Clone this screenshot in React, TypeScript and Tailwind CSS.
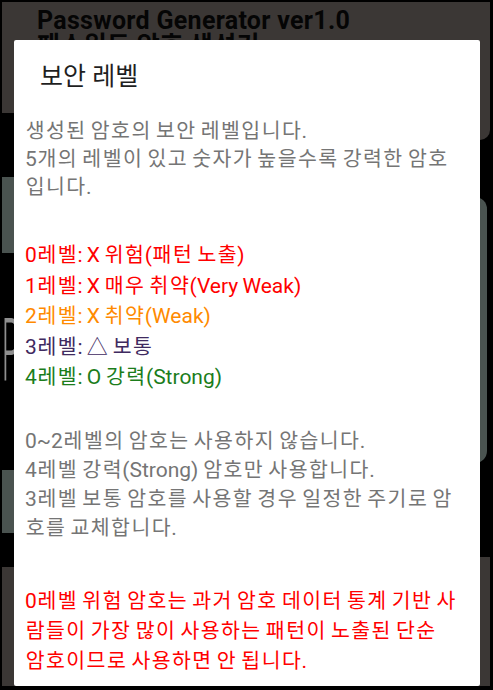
import React from "react";

const bodyLines = ["생성된 암호의 보안 레벨입니다.", "5개의 레벨이 있고 숫자가 높을수록 강력한 암호", "입니다."];

const levels: { text: string; color: string }[] = [
  { text: "0레벨: X 위험(패턴 노출)", color: "text-[#ff0000]" },
  { text: "1레벨: X 매우 취약(Very Weak)", color: "text-[#ff0000]" },
  { text: "2레벨: X 취약(Weak)", color: "text-[#ff8a00]" },
  { text: "3레벨: △ 보통", color: "text-[#3f2a60]" },
  { text: "4레벨: O 강력(Strong)", color: "text-[#1b7d1b]" },
];

const usageLines = [
  "0~2레벨의 암호는 사용하지 않습니다.",
  "4레벨 강력(Strong) 암호만 사용합니다.",
  "3레벨 보통 암호를 사용할 경우 일정한 주기로 암",
  "호를 교체합니다.",
];

const warningLines = [
  "0레벨 위험 암호는 과거 암호 데이터 통계 기반 사",
  "람들이 가장 많이 사용하는 패턴이 노출된 단순",
  "암호이므로 사용하면 안 됩니다.",
];

// Hangul syllables are laid out on a fixed advance (full-width cells);
// digits, Latin and punctuation stay in Roboto.
function Line({ text, className }: { text: string; className: string }) {
  const parts = text.split(/([\uAC00-\uD7A3]+)/);
  return (
    <div className={className}>
      {parts.map((p, i) =>
        i % 2 === 1 ? (
          Array.from(p).map((ch, j) => (
            <span key={`${i}-${j}`} className="inline-block w-[20.3px] text-center text-[20.5px]">
              {ch}
            </span>
          ))
        ) : (
          <span key={i} className="text-[21px]">
            {p}
          </span>
        )
      )}
    </div>
  );
}

function BackgroundApp() {
  return (
    <div className="flex h-full flex-col">
      {/* app title bar (dimmed behind the dialog) */}
      <div className="h-[58px] shrink-0 bg-[#3b3735] pl-[35px] pt-[6px] font-bold text-[25px] leading-[25px] tracking-[0.3px] text-[#050505]">
        <div className="whitespace-nowrap">Password Generator ver1.0</div>
        <div className="whitespace-nowrap">패스워드 암호 생성기</div>
      </div>
      <div className="flex flex-1">
        {/* left column */}
        <div className="flex w-1/2 flex-col">
          <div className="h-[53px] bg-[#3b3735]" />
          <div className="h-[64px] bg-black" />
          <div className="h-[76px] bg-[#4a5350]" />
          <div className="h-[64px] bg-black" />
          <div className="h-[65px] overflow-hidden bg-black">
            <div className="origin-left scale-x-[0.32] text-[88px] leading-[65px] font-light text-[#8f8f8f]">P</div>
          </div>
          <div className="h-[88px] bg-black" />
          <div className="h-[63px] bg-[#4a5350]" />
          <div className="h-[34px] bg-black" />
          <div className="flex-1 bg-[#3b3735]" />
        </div>
        {/* right column */}
        <div className="flex w-1/2 flex-col bg-black">
          <div className="h-[80px] rounded-br-[10px] bg-[#3b3735]" />
          <div className="h-[57px]" />
          <div className="mr-[3px] h-[266px] rounded-r-[12px] bg-[#4a5350]" />
          <div className="h-[94px]" />
          <div className="flex-1 bg-[#3b3735]" />
        </div>
      </div>
    </div>
  );
}

export default function App() {
  return (
    <div className="relative h-[690px] w-[493px] overflow-hidden bg-black pb-[4px] pl-[2px] pr-[3px] pt-[2px] font-['Roboto','Noto_Sans_CJK_KR',sans-serif]">
      <BackgroundApp />

      {/* modal dialog */}
      <div className="absolute left-[14px] top-[40px] h-[646px] w-[466px] overflow-hidden rounded-[2px] bg-white">
        <div className="pl-[26px] pt-[22px] text-[25px] leading-[30px] text-[#1f1f1f]">보안 레벨</div>

        <div className="mt-[25px] pl-[11px] whitespace-nowrap [word-spacing:-1px]">
          <div className="text-[#757575]">
            {bodyLines.map((l) => (
              <Line key={l} text={l} className="h-[28px] leading-[28px]" />
            ))}
          </div>

          <div className="mt-[39px]">
            {levels.map((lv) => (
              <Line key={lv.text} text={lv.text} className={`h-[30.5px] leading-[30.5px] ${lv.color}`} />
            ))}
          </div>

          <div className="mt-[34px] text-[#757575]">
            {usageLines.map((l) => (
              <Line key={l} text={l} className="h-[29px] leading-[29px]" />
            ))}
          </div>

          <div className="mt-[43px] text-[#ff0000]">
            {warningLines.map((l) => (
              <Line key={l} text={l} className="h-[30px] leading-[30px]" />
            ))}
          </div>
        </div>
      </div>
    </div>
  );
}
